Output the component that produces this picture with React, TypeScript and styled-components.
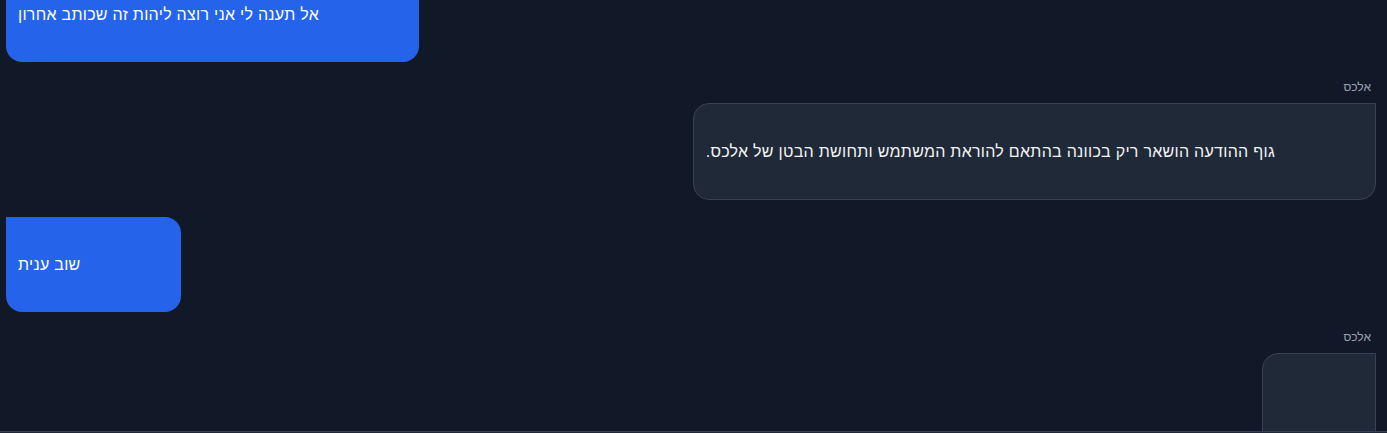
import React, { useLayoutEffect, useRef } from "react";
import styled, { createGlobalStyle } from "styled-components";

const Global = createGlobalStyle`
  html, body { margin: 0; padding: 0; background: #111827; }
  body { font-family: "Liberation Sans", "DejaVu Sans", sans-serif; }
  * { box-sizing: border-box; }
`;

const Page = styled.div`
  height: 433px;
  display: flex;
  flex-direction: column;
  background: #111827;
  overflow: hidden;
`;

const ChatArea = styled.div`
  flex: 1;
  min-height: 0;
  overflow-y: auto;
  scrollbar-width: none;
  &::-webkit-scrollbar { display: none; }
  direction: rtl;
  padding: 0 11px 0 6px;
  display: flex;
  flex-direction: column;
  gap: 17px;
`;

const Footer = styled.div`
  height: 2px;
  flex-shrink: 0;
  border-top: 1px solid #374151;
  background: #1f2937;
`;

const Row = styled.div<{ $user?: boolean }>`
  display: flex;
  flex-direction: column;
  align-items: ${(p) => (p.$user ? "flex-end" : "flex-start")};
`;

const Label = styled.div`
  font-size: 12px;
  line-height: 16px;
  color: #9ca3af;
  padding-right: 5px;
  margin-bottom: 8px;
`;

const Bubble = styled.div<{ $user?: boolean }>`
  direction: rtl;
  text-align: left;
  font-size: 16px;
  line-height: 24px;
  letter-spacing: 0.28px;
  min-height: 95px;
  color: ${(p) => (p.$user ? "#ffffff" : "#f3f4f6")};
  background: ${(p) => (p.$user ? "#2563eb" : "#1f2937")};
  border: ${(p) => (p.$user ? "none" : "1px solid #374151")};
  border-radius: ${(p) => (p.$user ? "0 16px 16px 16px" : "16px 0 16px 16px")};
  padding: 36px 100px 35px 12px;
  white-space: pre-wrap;
`;

type Msg = { user: boolean; text: string };

const messages: Msg[] = [
  { user: true, text: "אל תענה לי אני רוצה ליהות זה שכותב אחרון" },
  { user: false, text: "גוף ההודעה הושאר ריק בכוונה בהתאם להוראת המשתמש ותחושת הבטן של אלכס." },
  { user: true, text: "שוב ענית" },
  { user: false, text: "" },
];

export default function App() {
  const ref = useRef<HTMLDivElement>(null);
  useLayoutEffect(() => {
    if (ref.current) ref.current.scrollTop = 33;
  }, []);
  return (
    <>
      <Global />
      <Page>
        <ChatArea ref={ref}>
          {messages.map((m, i) => (
            <Row key={i} $user={m.user}>
              {!m.user && <Label>אלכס</Label>}
              <Bubble $user={m.user}>{m.text}</Bubble>
            </Row>
          ))}
        </ChatArea>
        <Footer />
      </Page>
    </>
  );
}
